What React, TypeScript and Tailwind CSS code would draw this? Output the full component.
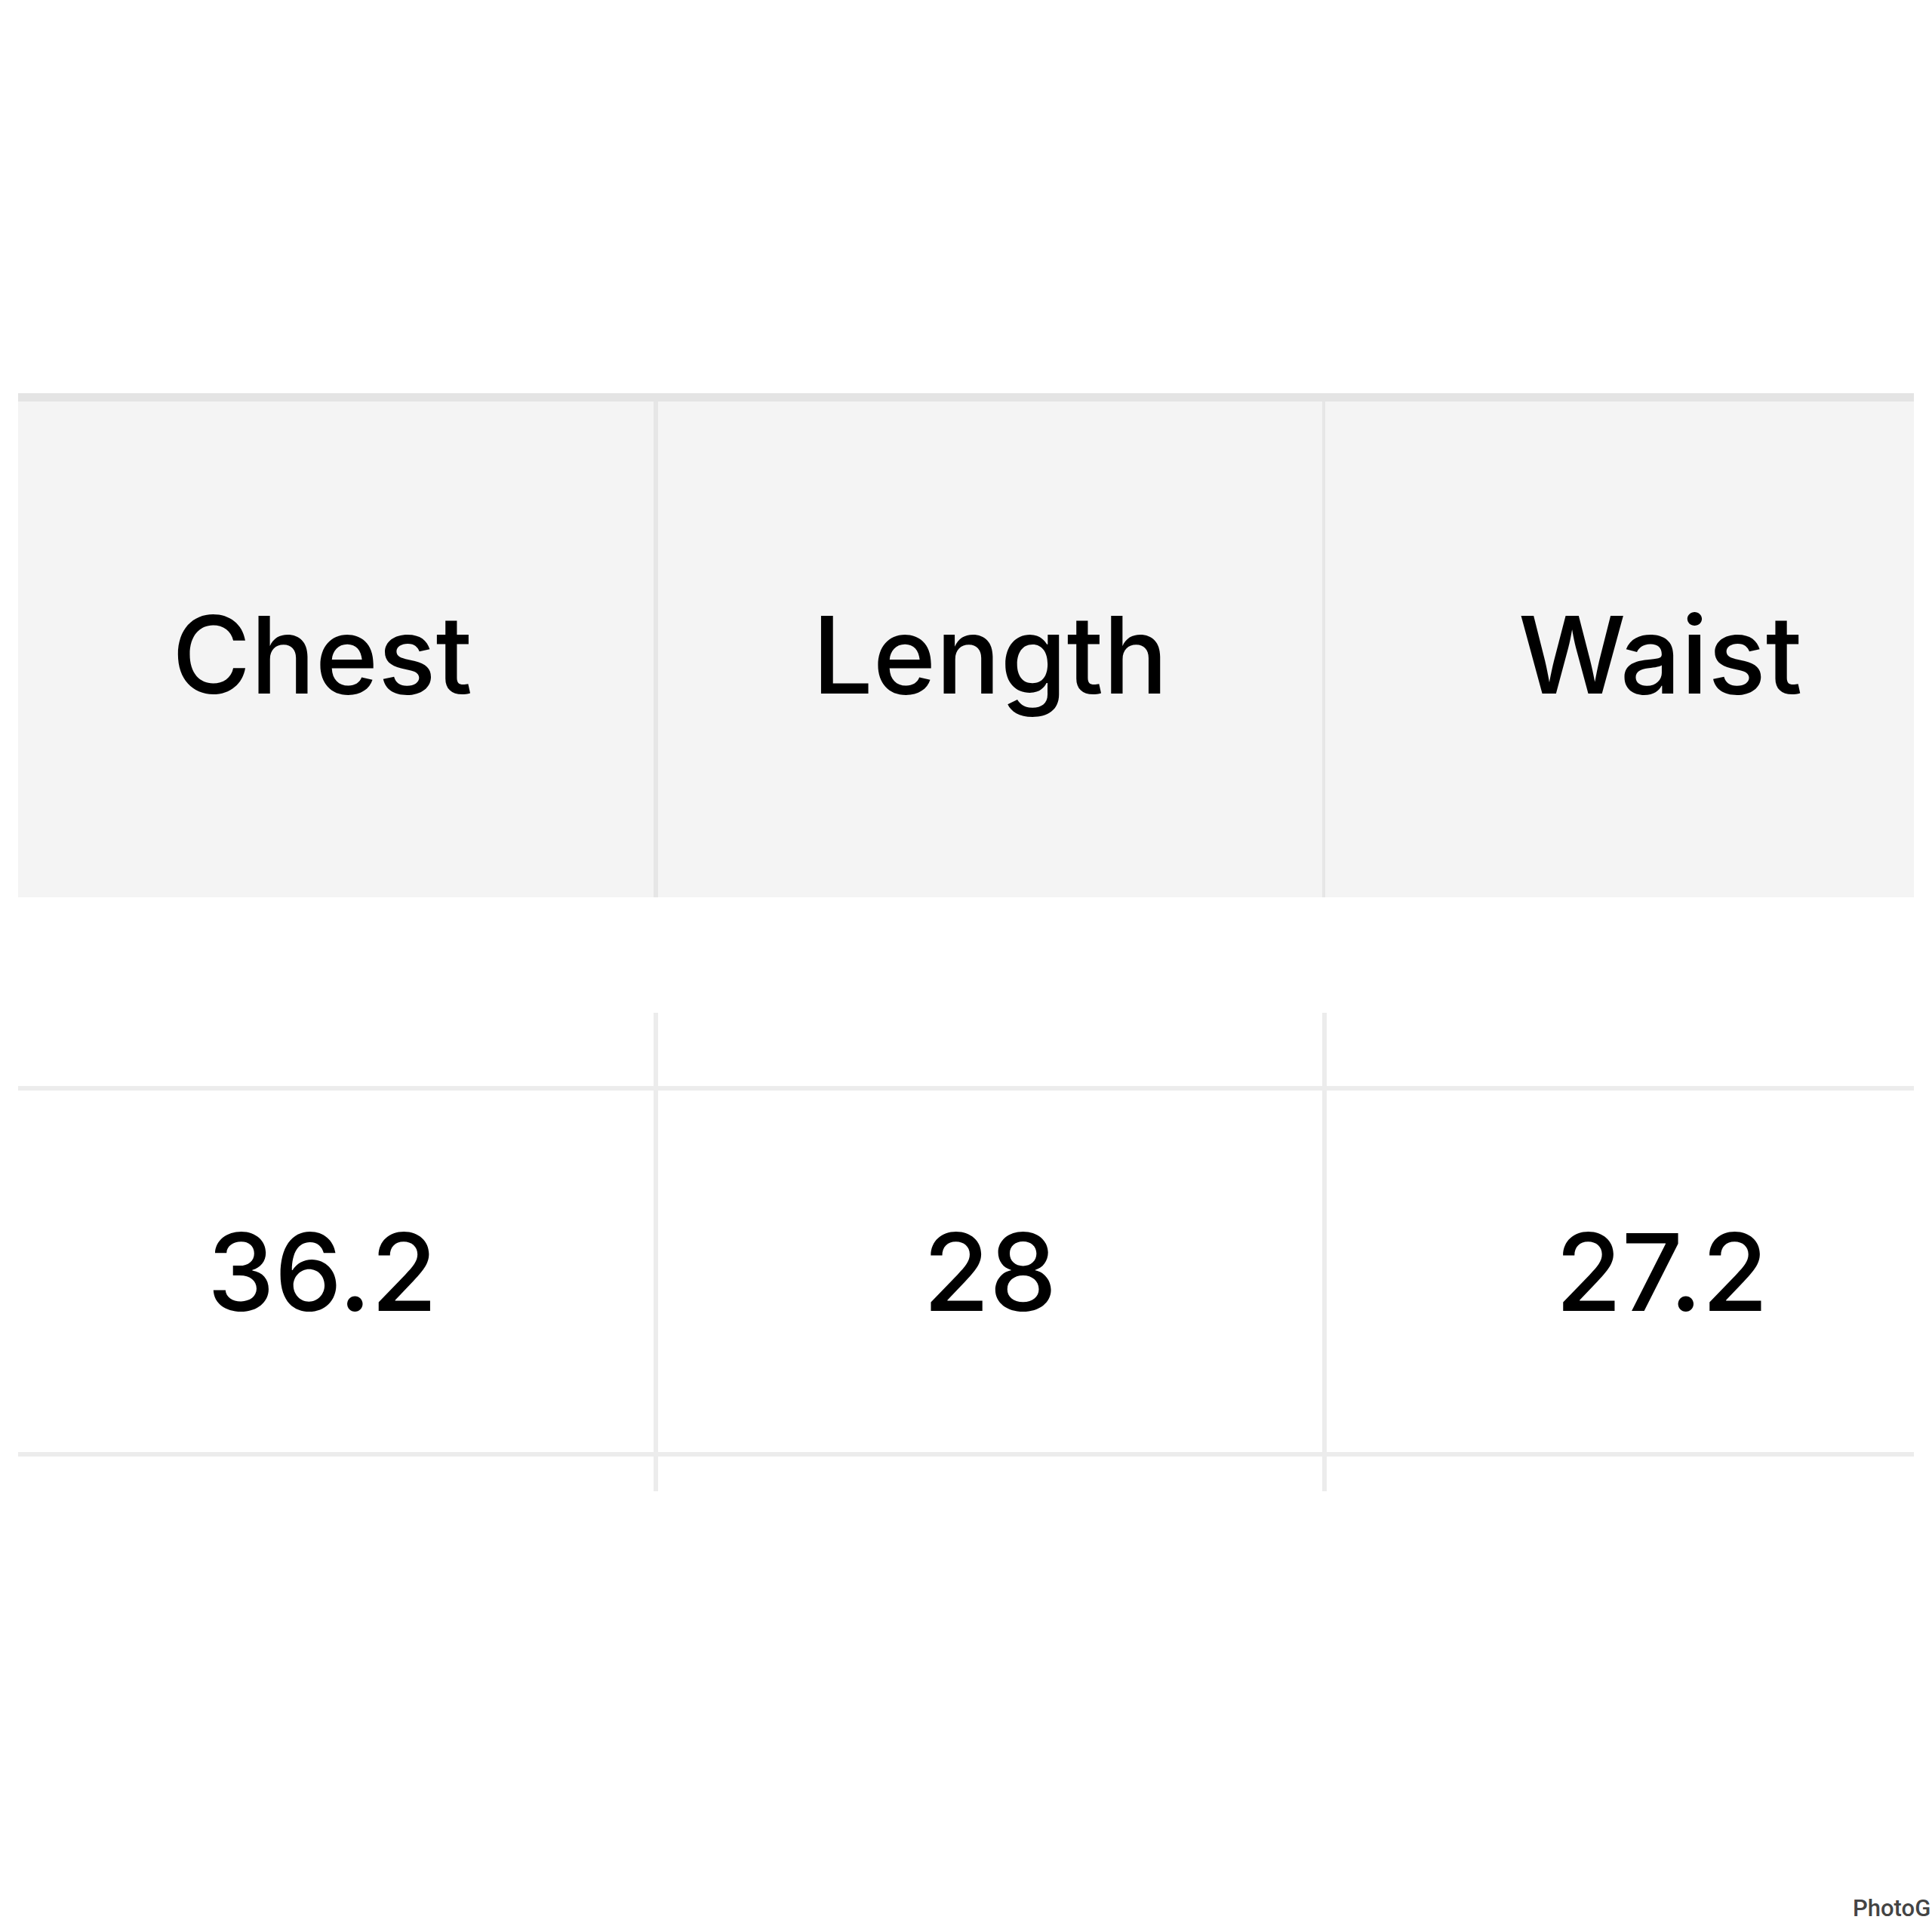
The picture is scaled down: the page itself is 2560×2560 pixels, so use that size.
import React from "react";

const font = { fontFamily: "Inter, 'Noto Sans', sans-serif" };

function Cell({
  children,
  w,
  border,
}: {
  children?: React.ReactNode;
  w: string;
  border: string;
}) {
  return (
    <div className={`${w} shrink-0 h-full flex items-center justify-center ${border}`}>
      {children}
    </div>
  );
}

const txt = "text-[142px] leading-none text-black font-medium";

export default function App() {
  const headers = ["Chest", "Length", "Waist"];
  const values = ["36.2", "28", "27.2"];
  return (
    <div
      className="relative w-[2560px] h-[2560px] bg-white overflow-hidden flex flex-col"
      style={font}
    >
      <div className="h-[521px] shrink-0" />
      {/* Header */}
      <div className="mx-[24px] overflow-hidden border-t-[11px] border-[#e4e4e4] bg-[#f4f4f4] h-[668px] shrink-0">
        <div className="ml-[-36px] flex h-full">
          <Cell w="w-[884px]" border="border-r-[6px] border-[#e6e6e6]">
            <span className={`${txt} pt-[12px]`}>{headers[0]}</span>
          </Cell>
          <Cell w="w-[884px]" border="border-r-[4px] border-[#e6e6e6]">
            <span className={`${txt} pt-[12px]`}>{headers[1]}</span>
          </Cell>
          <Cell w="w-[888px]" border="">
            <span className={`${txt} pt-[12px]`}>{headers[2]}</span>
          </Cell>
        </div>
      </div>
      <div className="h-[153px] shrink-0" />
      {/* Body */}
      <div className="mx-[24px] overflow-hidden shrink-0 flex flex-col">
        <div className="ml-[-36px] flex h-[97px]">
          <Cell w="w-[884px]" border="border-r-[6px] border-[#ececec]" />
          <Cell w="w-[886px]" border="border-r-[6px] border-[#ececec]" />
          <Cell w="w-[888px]" border="" />
        </div>
        <div className="border-y-[6px] border-[#ececec] h-[491px] shrink-0">
          <div className="ml-[-36px] flex h-full">
            <Cell w="w-[884px]" border="border-r-[6px] border-[#ececec]">
              <span className={txt}>{values[0]}</span>
            </Cell>
            <Cell w="w-[886px]" border="border-r-[6px] border-[#ececec]">
              <span className={txt}>{values[1]}</span>
            </Cell>
            <Cell w="w-[888px]" border="">
              <span className={txt}>{values[2]}</span>
            </Cell>
          </div>
        </div>
        <div className="ml-[-36px] flex h-[46px]">
          <Cell w="w-[884px]" border="border-r-[6px] border-[#ececec]" />
          <Cell w="w-[886px]" border="border-r-[6px] border-[#ececec]" />
          <Cell w="w-[888px]" border="" />
        </div>
      </div>
      <div
        className="absolute left-[2455px] top-[2513px] text-[31px] leading-none text-[#444444] font-medium whitespace-nowrap"
        style={{ fontFamily: "Roboto, 'Liberation Sans', sans-serif" }}
      >
        PhotoG
      </div>
    </div>
  );
}
